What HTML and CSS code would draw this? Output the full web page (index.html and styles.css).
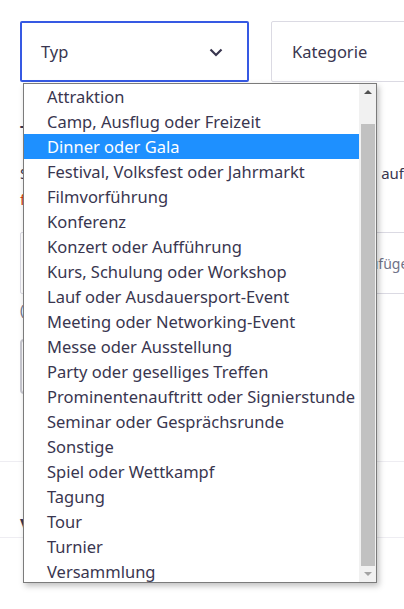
FILE: index.html
```html
<!doctype html>
<html>
<head>
    <meta charset="utf-8">
    <link rel="stylesheet" href="styles.css">
</head>
<body>

<div class="page">
    <div class="select-row">
        <div class="field field-active">
            <span>Typ</span>
            <svg class="chevron" width="14" height="9" viewBox="0 0 14 9"><path d="M1.5 1.5 L7 7 L12.5 1.5" fill="none" stroke="#39364f" stroke-width="2.2"/></svg>
        </div>
        <div class="field">
            <span>Kategorie</span>
        </div>
    </div>

    <h3 class="section-title">Tags</h3>
    <div class="section-text">
        <p class="text-line">Steigere die Sichtbarkeit mit Tags, die gut auf</p>
        <p class="text-line text-link">für andere zusammenfassen.</p>
    </div>

    <div class="tag-input">
        <span class="tag-placeholder">Tag mit Enter hinzufügen</span>
    </div>
    <div class="counter">(0/10)</div>

    <div class="org-box"></div>

    <div class="divider"></div>
    <div class="next-title">v</div>
    <div class="divider divider-low"></div>

    <div class="dropdown">
        <ul class="options">
            <li>Attraktion</li>
            <li>Camp, Ausflug oder Freizeit</li>
            <li class="selected">Dinner oder Gala</li>
            <li>Festival, Volksfest oder Jahrmarkt</li>
            <li>Filmvorführung</li>
            <li>Konferenz</li>
            <li>Konzert oder Aufführung</li>
            <li>Kurs, Schulung oder Workshop</li>
            <li>Lauf oder Ausdauersport-Event</li>
            <li>Meeting oder Networking-Event</li>
            <li>Messe oder Ausstellung</li>
            <li>Party oder geselliges Treffen</li>
            <li>Prominentenauftritt oder Signierstunde</li>
            <li>Seminar oder Gesprächsrunde</li>
            <li>Sonstige</li>
            <li>Spiel oder Wettkampf</li>
            <li>Tagung</li>
            <li>Tour</li>
            <li>Turnier</li>
            <li>Versammlung</li>
        </ul>
        <div class="scrollbar">
            <div class="arrow arrow-up"></div>
            <div class="thumb"></div>
            <div class="arrow arrow-down"></div>
        </div>
    </div>
</div>

</body>
</html>
```

FILE: styles.css
```css
html,
body {
    width: 100%;
    height: 100%;
    padding: 0;
    margin: 0;
    overflow: hidden;
    background: #fff;
}

body {
    font-family: "Noto Sans", "Liberation Sans", sans-serif;
    color: #39364f;
}

.page {
    position: relative;
    padding: 21px 0 0 20px;
    width: 600px;
}

.select-row {
    display: grid;
    grid-template-columns: 229px 229px;
    gap: 22px;
}

.field {
    box-sizing: border-box;
    height: 61px;
    border: 1px solid #dbdae3;
    border-radius: 2px;
    display: flex;
    align-items: center;
    justify-content: space-between;
    padding: 0 24px 0 20px;
    font-size: 16.5px;
}

.field-active {
    border: 2px solid #3659e3;
    padding-left: 19px;
}

.chevron {
    margin-top: 1px;
}

.section-title {
    margin: 38px 0 0;
    font-size: 18px;
    font-weight: 600;
}

.section-text {
    margin-top: 16px;
    width: 384px;
    font-size: 15px;
    line-height: 26px;
}

.text-line {
    margin: 0;
    white-space: nowrap;
}

.text-line:first-child {
    text-align: justify;
    text-align-last: justify;
}

.text-link {
    color: #d1410c;
}

.tag-input {
    box-sizing: border-box;
    margin-top: 20px;
    width: 440px;
    height: 62px;
    border: 1px solid #dbdae3;
    border-radius: 2px;
    display: flex;
    align-items: center;
    justify-content: flex-end;
    padding-right: 42px;
    font-size: 14px;
    color: #6f7287;
}

.counter {
    margin-top: 6px;
    font-size: 14px;
    color: #6f7287;
}

.org-box {
    margin-top: 20px;
    width: 200px;
    height: 51px;
    border: 2px solid #c8c8d0;
    border-radius: 4px;
}

.divider {
    margin: 67px 0 0 -20px;
    border-top: 1px solid #eeedf2;
}

.divider-low {
    margin-top: 8px;
}

.next-title {
    margin-top: 53px;
    font-size: 18px;
    font-weight: 700;
    line-height: 14px;
}

/* aufgeklapptes select */
.dropdown {
    position: absolute;
    top: 83px;
    left: 23px;
    width: 352px;
    height: 498px;
    border: 1px solid #7b7b7b;
    background: #fff;
    box-shadow: 2px 3px 6px rgba(0, 0, 0, 0.25);
    display: flex;
    overflow: hidden;
}

.options {
    list-style: none;
    margin: 0;
    padding: 0;
    flex: 1;
    font-size: 16.5px;
}

.options li {
    height: 25px;
    line-height: 25px;
    padding-left: 23px;
    white-space: nowrap;
}

.options li.selected {
    background: #1e90ff;
    color: #fff;
}

.scrollbar {
    width: 17px;
    background: #f1f1f1;
    display: flex;
    flex-direction: column;
    align-items: center;
}

.arrow {
    width: 0;
    height: 0;
    border-left: 4px solid transparent;
    border-right: 4px solid transparent;
    margin: 6px 0;
}

.arrow-up {
    border-bottom: 4px solid #505050;
}

.arrow-down {
    border-top: 4px solid #a3a3a3;
}

.thumb {
    flex: 1;
    width: 14px;
    margin: 24px 0 0;
    background: #c1c1c1;
}
```
